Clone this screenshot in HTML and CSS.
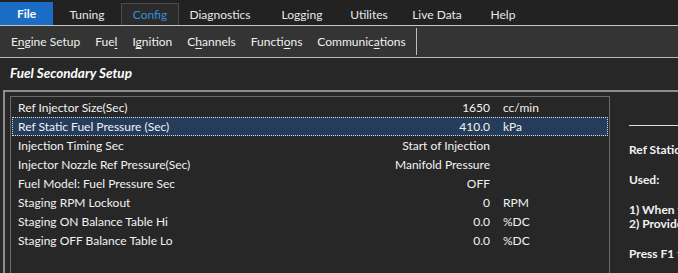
FILE: index.html
```html
<!DOCTYPE html>
<html>
<head>
<meta charset="utf-8">
<link rel="stylesheet" href="styles.css">
</head>
<body>
<div class="app">
  <nav class="menubar">
    <span class="tab file">File</span>
    <span class="tab w68">Tuning</span>
    <span class="tab active">Config</span>
    <span class="tab w82">Diagnostics</span>
    <span class="tab w82">Logging</span>
    <span class="tab w52">Utilites</span>
    <span class="tab w84">Live Data</span>
    <span class="tab w48">Help</span>
  </nav>
  <div class="toolbar">
    <span class="tool">E<u>n</u>gine Setup</span>
    <span class="tool">Fue<u>l</u></span>
    <span class="tool">I<u>g</u>nition</span>
    <span class="tool">C<u>h</u>annels</span>
    <span class="tool">Functi<u>o</u>ns</span>
    <span class="tool">Communic<u>a</u>tions</span>
    <span class="sep"></span>
  </div>
  <div class="title">Fuel Secondary Setup</div>
  <div class="frame">
    <div class="list">
      <div class="row"><span class="label">Ref Injector Size(Sec)</span><span class="value">1650</span><span class="unit">cc/min</span></div>
      <div class="row selected"><span class="label">Ref Static Fuel Pressure (Sec)</span><span class="value">410.0</span><span class="unit">kPa</span></div>
      <div class="row"><span class="label">Injection Timing Sec</span><span class="value">Start of Injection</span><span class="unit"></span></div>
      <div class="row"><span class="label">Injector Nozzle Ref Pressure(Sec)</span><span class="value">Manifold Pressure</span><span class="unit"></span></div>
      <div class="row"><span class="label">Fuel Model: Fuel Pressure Sec</span><span class="value">OFF</span><span class="unit"></span></div>
      <div class="row"><span class="label">Staging RPM Lockout</span><span class="value">0</span><span class="unit">RPM</span></div>
      <div class="row"><span class="label">Staging ON Balance Table Hi</span><span class="value">0.0</span><span class="unit">%DC</span></div>
      <div class="row"><span class="label">Staging OFF Balance Table Lo</span><span class="value">0.0</span><span class="unit">%DC</span></div>
    </div>
    <aside class="help">
      <div class="rule"></div>
      <p class="para">Ref Static Fuel Pressure (Sec)</p>
      <p class="para">Used:</p>
      <p class="para">1) When fuel pressure sensor is not fitted<br>2) Provides reference for injector flow</p>
      <p class="para">Press F1 for more help</p>
    </aside>
  </div>
</div>
</body>
</html>
```
FILE: styles.css
```css
html, body {
  margin: 0;
  padding: 0;
  background: #272727;
}
body {
  width: 678px;
  height: 273px;
  overflow: hidden;
  font-family: "Segoe UI", Lato, "Noto Sans", sans-serif;
  font-size: 12px;
  color: #f2f2f2;
}
.app {
  display: flex;
  flex-direction: column;
  height: 273px;
}
.menubar {
  display: flex;
  align-items: flex-end;
  height: 25px;
  background: #222222;
  flex: none;
}
.tab {
  display: flex;
  align-items: center;
  justify-content: center;
  height: 22px;
  color: #e8e8e8;
  box-sizing: border-box;
}
.tab.file {
  width: 53px;
  height: 23px;
  background: #1a6cc4;
  color: #ffffff;
  font-weight: bold;
}
.w68 { width: 68px; }
.w82 { width: 82px; }
.w52 { width: 52px; }
.w84 { width: 84px; }
.w48 { width: 48px; }
.tab.active {
  width: 58px;
  height: 22px;
  background: #2b2b2b;
  border: 1px solid #4c4c4c;
  border-bottom: none;
  color: #3a8cdc;
}
.toolbar {
  display: flex;
  align-items: center;
  height: 31px;
  background: #343434;
  border-top: 1px solid #c4c4c4;
  border-bottom: 1px solid #b8b8b8;
  padding-left: 11px;
  gap: 15px;
  flex: none;
}
.tool {
  color: #f0f0f0;
  white-space: nowrap;
}
.tool u {
  text-underline-offset: 2px;
}
.sep {
  width: 1px;
  height: 27px;
  background: #bdbdbd;
  margin-left: -5px;
}
.title {
  height: 32px;
  box-sizing: border-box;
  padding-bottom: 3px;
  display: flex;
  align-items: center;
  padding-left: 10px;
  font-weight: bold;
  font-style: italic;
  font-size: 13.5px;
  color: #ffffff;
  flex: none;
}
.frame {
  flex: 1;
  display: flex;
  margin-left: 3px;
  border-top: 2px solid #8c8c8c;
  border-left: 2px solid #8c8c8c;
  padding: 4px 0 0 5px;
  min-height: 0;
}
.list {
  width: 598px;
  flex: none;
  border: 1px solid #6a6a6a;
  border-bottom: none;
  padding-top: 1px;
  background: #272727;
}
.row {
  display: grid;
  grid-template-columns: 1fr auto 104px;
  height: 19px;
  align-items: center;
  margin: 0 1px;
  border: 1px dotted transparent;
  box-sizing: border-box;
  white-space: nowrap;
}
.row.selected {
  background: #253d5a;
  border-color: #d8dde4;
}
.label {
  padding-left: 5px;
}
.value {
  text-align: right;
  padding-right: 13px;
}
.help {
  flex: 1;
  min-width: 0;
  overflow: hidden;
  padding-left: 19px;
  padding-top: 29px;
  font-weight: bold;
  white-space: nowrap;
}
.rule {
  height: 1px;
  background: #e0e0e0;
  width: 200px;
  margin-bottom: 17px;
}
.para {
  margin: 0 0 16px 0;
  line-height: 14px;
}
```
